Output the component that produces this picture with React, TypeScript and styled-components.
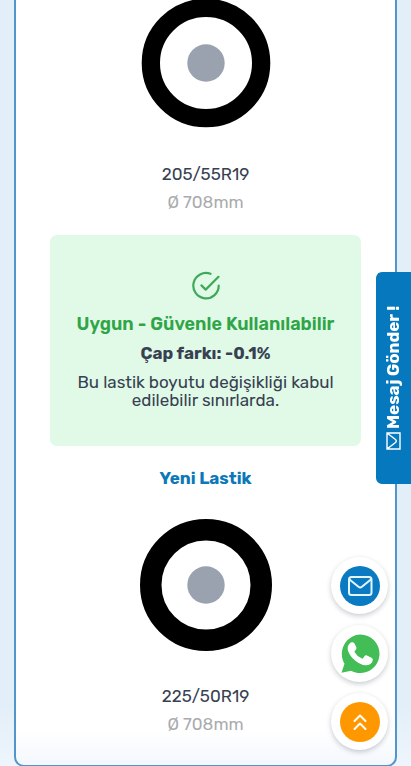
import React from "react";
import styled, { createGlobalStyle } from "styled-components";

const GlobalStyle = createGlobalStyle`
  *, *::before, *::after { box-sizing: border-box; }
  html { overflow-x: hidden; scrollbar-width: none; }
  body {
    margin: 0;
    background: #e3eff8;
    color: #374151;
    font-family: Rubik, Roboto, "Liberation Sans", sans-serif;
    font-size: 17px;
    line-height: 28px;
  }
  h2, h3, p { margin: 0; }
`;

const Page = styled.main`
  padding: 0 14px;
  background: linear-gradient(to top, #eef5fd, #e3eff8 60px);
`;

const Card = styled.section`
  display: flex;
  flex-direction: column;
  padding: 0 34px 27px;
  border: 2px solid #5096c8;
  border-top: 0;
  border-radius: 0 0 10px 10px;
  background: linear-gradient(to top, #f4f8fd, #ffffff 36px);
`;

const Tire = styled.article`
  display: flex;
  flex-direction: column;
  align-items: center;
  text-align: center;
`;

const TireTitle = styled.h2`
  margin-bottom: 27px;
  color: #0b78b8;
  font-size: 17px;
  font-weight: 700;
`;

const Wheel = styled.svg`
  display: block;
  width: 132px;
  height: 132px;
  margin-bottom: 31px;
`;

const FirstTire = styled(Tire)`
  margin-top: -3px;
`;

const TireSize = styled.p`
  color: #374151;
`;

const Diameter = styled.p`
  color: #a9abae;
`;

const Result = styled.section`
  display: flex;
  flex-direction: column;
  align-items: center;
  margin: 19px 0 18px;
  padding: 36px 24px;
  border-radius: 7px;
  background: #e0fae7;
  text-align: center;
`;

const ResultIcon = styled.svg`
  width: 30px;
  height: 30px;
  margin-bottom: 9px;
  color: #3fa95a;
`;

const ResultTitle = styled.h3`
  color: #30a547;
  font-size: 18px;
  line-height: 28px;
  font-weight: 600;
  white-space: nowrap;
`;

const Difference = styled.p`
  margin: 1px 0 6px;
  font-weight: 700;
`;

const Note = styled.p`
  padding-bottom: 1px;
  line-height: 18px;
`;

const MessageTab = styled.button`
  position: fixed;
  top: 272px;
  right: 0;
  display: flex;
  align-items: center;
  justify-content: center;
  gap: 3px;
  width: 35px;
  height: 212px;
  padding: 0;
  border: 0;
  border-radius: 0 6px 6px 0;
  background: #0678bd;
  color: #ffffff;
  font: 700 17px/20px Rubik, Roboto, "Liberation Sans", sans-serif;
  writing-mode: vertical-rl;
  transform: rotate(180deg);
  cursor: pointer;
`;

const TabIcon = styled.svg`
  width: 15px;
  height: 18px;
`;

const Actions = styled.nav`
  position: fixed;
  right: 23px;
  bottom: 16px;
  display: flex;
  flex-direction: column;
  gap: 11px;
`;

const Action = styled.a`
  display: grid;
  place-items: center;
  width: 57px;
  height: 57px;
  border-radius: 50%;
  background: #ffffff;
  box-shadow: 0 2px 5px rgba(40, 50, 70, 0.25);
`;

const ActionIcon = styled.svg`
  width: 40px;
  height: 40px;
`;

type WheelProps = { outer: number; inner: number };

function WheelDrawing({ outer, inner }: WheelProps) {
  return (
    <Wheel viewBox="0 0 132 132" aria-hidden="true">
      <circle cx="66" cy="66" r={(outer + inner) / 2} fill="#fff" stroke="#000" strokeWidth={outer - inner} />
      <circle cx="66" cy="66" r="18.7" fill="#9aa2b0" />
    </Wheel>
  );
}

export default function App() {
  return (
    <>
      <GlobalStyle />
      <Page>
        <Card>
          <FirstTire>
            <WheelDrawing outer={64.3} inner={46} />
            <TireSize>205/55R19</TireSize>
            <Diameter>Ø 708mm</Diameter>
          </FirstTire>

          <Result>
            <ResultIcon viewBox="0 0 30 30" fill="none" stroke="currentColor" strokeWidth="2.2" strokeLinecap="round" strokeLinejoin="round" aria-hidden="true">
              <path d="M19.5 2.8A12.7 12.7 0 1 0 27.7 14.5" />
              <path d="M10.4 14.4l4.3 4.2L27.5 5.8" />
            </ResultIcon>
            <ResultTitle>Uygun - Güvenle Kullanılabilir</ResultTitle>
            <Difference>Çap farkı: -0.1%</Difference>
            <Note>Bu lastik boyutu değişikliği kabul edilebilir sınırlarda.</Note>
          </Result>

          <Tire>
            <TireTitle>Yeni Lastik</TireTitle>
            <WheelDrawing outer={66} inner={44.5} />
            <TireSize>225/50R19</TireSize>
            <Diameter>Ø 708mm</Diameter>
          </Tire>
        </Card>
      </Page>

      <MessageTab type="button">
        <TabIcon viewBox="0 0 15 18" fill="none" stroke="#fff" strokeWidth="1.4" aria-hidden="true">
          <path d="M1 1h13v16H1zM14 1L5.500 7.500Q4 9 5.500 10.500L14 17" />
        </TabIcon>
        <span>Mesaj Gönder !</span>
      </MessageTab>

      <Actions>
        <Action href="#mail" aria-label="E-posta">
          <ActionIcon viewBox="0 0 40 40" fill="none" stroke="#e4f5ff" strokeWidth="2" strokeLinecap="round" strokeLinejoin="round" aria-hidden="true">
            <circle cx="20" cy="20" r="20" fill="#0a7bc2" stroke="none" />
            <rect x="9" y="11" width="22.5" height="18" rx="2.5" />
            <path d="M9.5 13.5l9 7.3q1.7 1.3 3.4 0l9-7.3" />
          </ActionIcon>
        </Action>
        <Action href="#whatsapp" aria-label="WhatsApp">
          <ActionIcon viewBox="0 0 40 40" aria-hidden="true">
            <path fill="#43bd55" d="M20.3.5A19.3 19.3 0 0 1 39.500 20 19.400 19.400 0 0 1 11 36.800L1.500 38.800 4.500 29.700A19.400 19.400 0 0 1 20.300.500z" />
            <path fill="#fff" stroke="#fff" strokeWidth="1.200" strokeLinejoin="round" d="M12.700 8.900c-1-.2-2 .3-2.800 1.200-1.500 1.700-2.100 3.800-1.300 6.500 1 3.300 3.700 7 7.200 9.800 3.700 3 7.600 4.600 10.700 4.300 2.900-.3 5.200-2 5.600-4.200.2-.9.1-1.600-.5-2l-4.900-2.500c-.7-.3-1.200-.1-1.700.5l-1.800 2.300c-.4.5-.9.6-1.500.3-3.300-1.400-5.900-3.700-7.700-6.900-.3-.5-.2-1 .2-1.400l1.400-1.800c.3-.4.4-.9.2-1.400l-2-4.100c-.3-.4-.6-.6-1.100-.6z" />
          </ActionIcon>
        </Action>
        <Action href="#top" aria-label="Yukarı çık">
          <ActionIcon viewBox="0 0 40 40" fill="none" stroke="#fff" strokeWidth="2" strokeLinecap="round" strokeLinejoin="round" aria-hidden="true">
            <circle cx="20" cy="20" r="20" fill="#ff9800" stroke="none" />
            <path d="M14.5 19l5.5-5.5 5.5 5.5M14.5 27l5.5-5.5 5.5 5.5" />
          </ActionIcon>
        </Action>
      </Actions>
    </>
  );
}
